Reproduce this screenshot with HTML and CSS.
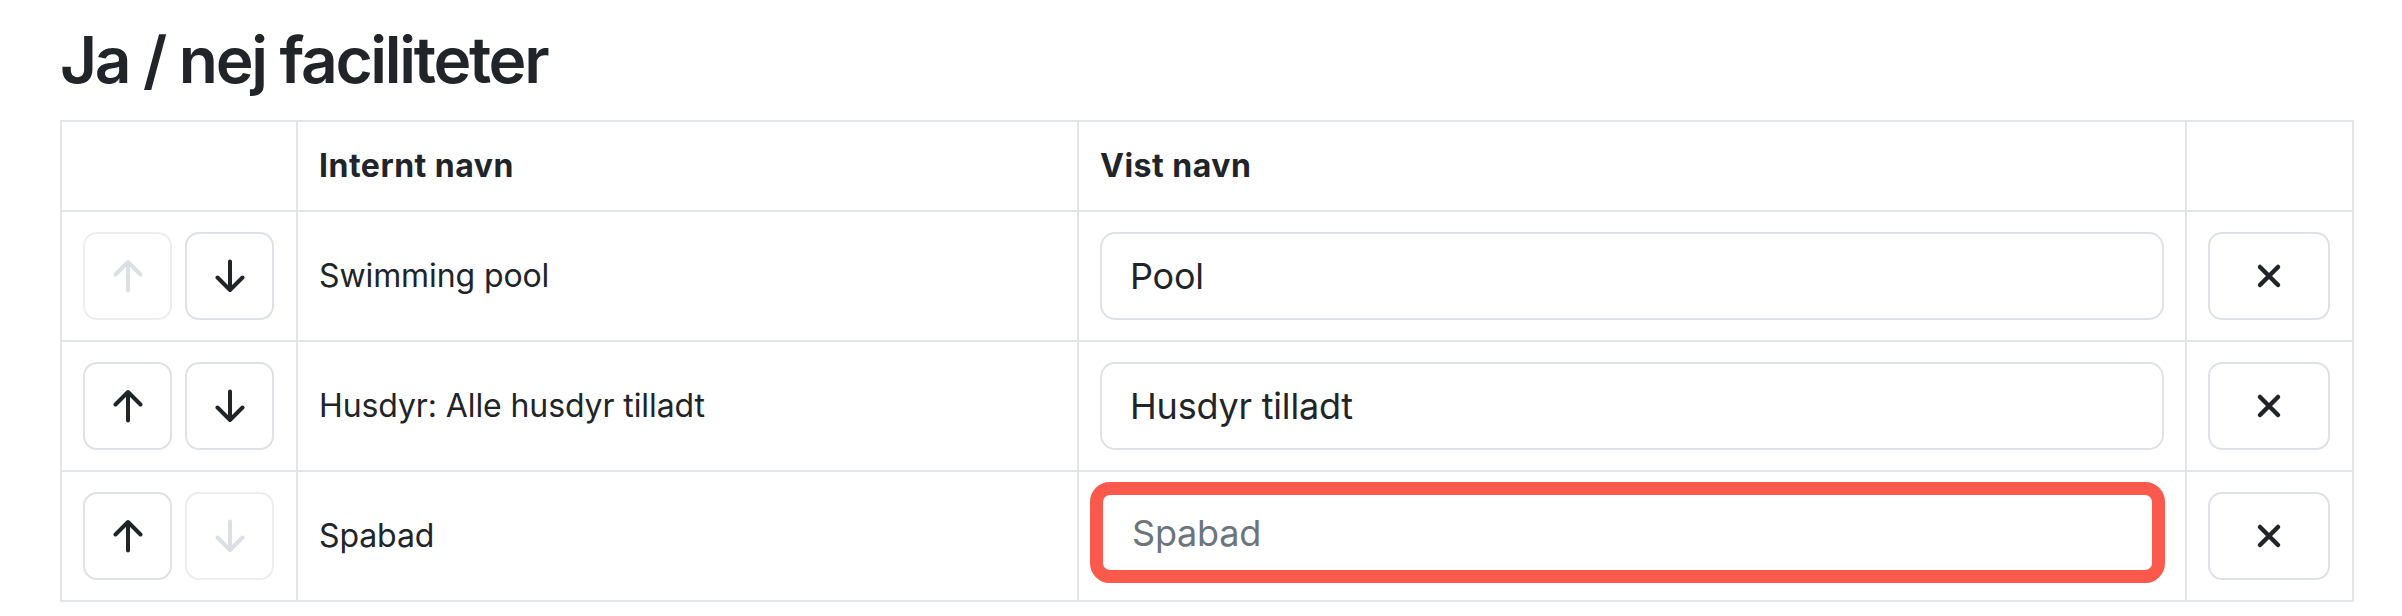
FILE: index.html
```html
<!DOCTYPE html>
<html lang="da">
<head>
<meta charset="utf-8">
<title>Ja / nej faciliteter</title>
<link rel="stylesheet" href="styles.css">
</head>
<body>
<div class="page">
  <h2 class="title">Ja / nej faciliteter</h2>
  <table class="fac">
    <colgroup>
      <col class="c-move">
      <col class="c-internal">
      <col class="c-shown">
      <col class="c-del">
    </colgroup>
    <thead>
      <tr>
        <th></th>
        <th>Internt navn</th>
        <th>Vist navn</th>
        <th></th>
      </tr>
    </thead>
    <tbody>
      <tr>
        <td>
          <div class="moves">
            <button class="btn btn-move" disabled aria-label="Flyt op">
              <svg class="ico-arrow" viewBox="0 0 30 34"><path d="M15 31.5V3M2.5 15.5L15 3l12.5 12.5"/></svg>
            </button>
            <button class="btn btn-move" aria-label="Flyt ned">
              <svg class="ico-arrow" viewBox="0 0 30 34"><path d="M15 2.5V31M2.5 18.5L15 31l12.5-12.5"/></svg>
            </button>
          </div>
        </td>
        <td class="name">Swimming pool</td>
        <td><input class="field" type="text" value="Pool"></td>
        <td>
          <button class="btn btn-del" aria-label="Slet">
            <svg class="ico-x" viewBox="0 0 26 26"><path d="M4 4l18 18M22 4L4 22"/></svg>
          </button>
        </td>
      </tr>
      <tr>
        <td>
          <div class="moves">
            <button class="btn btn-move" aria-label="Flyt op">
              <svg class="ico-arrow" viewBox="0 0 30 34"><path d="M15 31.5V3M2.5 15.5L15 3l12.5 12.5"/></svg>
            </button>
            <button class="btn btn-move" aria-label="Flyt ned">
              <svg class="ico-arrow" viewBox="0 0 30 34"><path d="M15 2.5V31M2.5 18.5L15 31l12.5-12.5"/></svg>
            </button>
          </div>
        </td>
        <td class="name">Husdyr: Alle husdyr tilladt</td>
        <td><input class="field" type="text" value="Husdyr tilladt"></td>
        <td>
          <button class="btn btn-del" aria-label="Slet">
            <svg class="ico-x" viewBox="0 0 26 26"><path d="M4 4l18 18M22 4L4 22"/></svg>
          </button>
        </td>
      </tr>
      <tr>
        <td>
          <div class="moves">
            <button class="btn btn-move" aria-label="Flyt op">
              <svg class="ico-arrow" viewBox="0 0 30 34"><path d="M15 31.5V3M2.5 15.5L15 3l12.5 12.5"/></svg>
            </button>
            <button class="btn btn-move" disabled aria-label="Flyt ned">
              <svg class="ico-arrow" viewBox="0 0 30 34"><path d="M15 2.5V31M2.5 18.5L15 31l12.5-12.5"/></svg>
            </button>
          </div>
        </td>
        <td class="name">Spabad</td>
        <td><input class="field field-invalid" type="text" placeholder="Spabad"></td>
        <td>
          <button class="btn btn-del" aria-label="Slet">
            <svg class="ico-x" viewBox="0 0 26 26"><path d="M4 4l18 18M22 4L4 22"/></svg>
          </button>
        </td>
      </tr>
    </tbody>
  </table>
</div>
</body>
</html>
```

FILE: styles.css
```css
* {
  box-sizing: border-box;
}

html, body {
  margin: 0;
  padding: 0;
  background: #ffffff;
}

body {
  font-family: Inter, "Liberation Sans", Arial, sans-serif;
  color: #212529;
}

.page {
  padding: 21px 49px 0 60px;
}

.title {
  margin: 0 0 22px 0;
  font-size: 64px;
  line-height: 77px;
  font-weight: 600;
  letter-spacing: -2.3px;
  color: #212529;
}

.fac {
  width: 2294px;
  table-layout: fixed;
  border-collapse: collapse;
  font-size: 32px;
  line-height: 48px;
}

.c-move { width: 236px; }
.c-internal { width: 781px; }
.c-shown { width: 1108px; }
.c-del { width: 167px; }

.fac th,
.fac td {
  border: 2px solid #e3e6e9;
  padding: 20px 21px;
  vertical-align: middle;
  text-align: left;
}

.fac th {
  font-weight: 700;
  letter-spacing: 0.5px;
}

.name {
  font-weight: 400;
  letter-spacing: -0.1px;
}

.moves {
  display: flex;
  gap: 13px;
}

.btn {
  display: flex;
  align-items: center;
  justify-content: center;
  height: 88px;
  padding: 0;
  margin: 0;
  background: #ffffff;
  border: 2px solid #dee2e6;
  border-radius: 14px;
  color: #212529;
}

.btn-move {
  width: 89px;
}

.btn-move:disabled {
  border-color: #eceef0;
  color: #dcdfe3;
}

.btn-del {
  width: 122px;
}

.ico-arrow {
  width: 30px;
  height: 34px;
  fill: none;
  stroke: currentColor;
  stroke-width: 4;
  stroke-linecap: round;
  stroke-linejoin: round;
}

.ico-x {
  width: 26px;
  height: 26px;
  fill: none;
  stroke: currentColor;
  stroke-width: 4.5;
  stroke-linecap: round;
}

.field {
  display: block;
  width: 100%;
  height: 88px;
  margin: 0;
  padding: 0 28px;
  font-family: Inter, "Liberation Sans", Arial, sans-serif;
  font-size: 36px;
  letter-spacing: -0.2px;
  color: #212529;
  background: #ffffff;
  border: 2px solid #dee2e6;
  border-radius: 15px;
  outline: none;
}

.field::placeholder {
  color: #6c757d;
  opacity: 1;
}

.field-invalid {
  width: calc(100% + 11px);
  height: 101px;
  margin: -10px -1px -3px -10px;
  padding: 0 28px 0 29px;
  border: 13px solid #fc594d;
  border-radius: 20px;
}
```
